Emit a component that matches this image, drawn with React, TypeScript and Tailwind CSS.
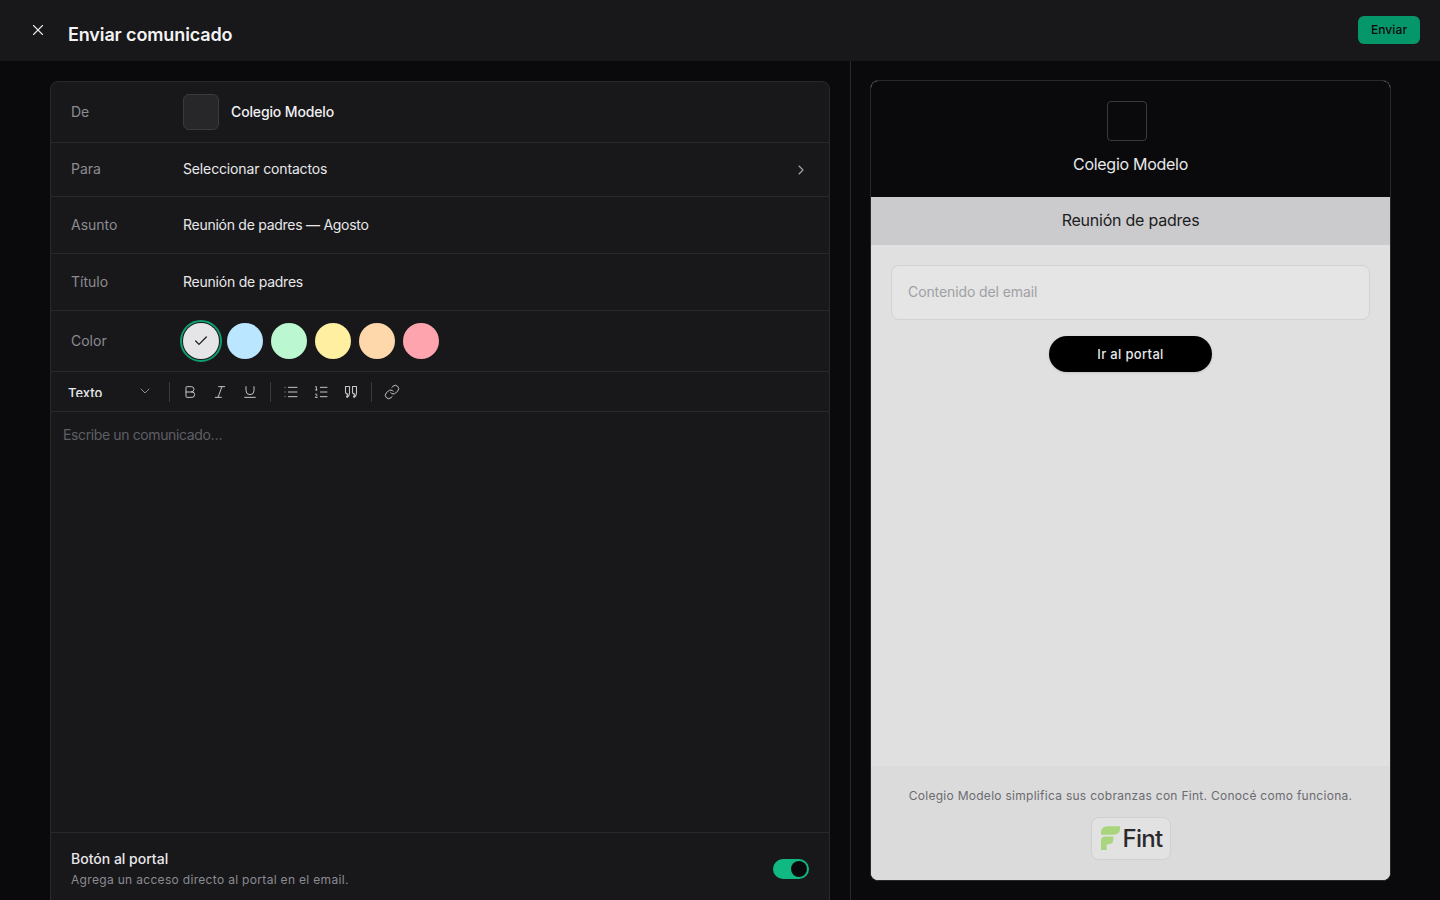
import React from "react";
import { X, ChevronRight, ChevronDown, Check, Bold, Italic, Underline, List, ListOrdered, Link } from "lucide-react";

function Row({ label, h, children }: { label: string; h: string; children: React.ReactNode }) {
  return (
    <div className={`flex items-center border-b border-[#29292c] pl-5 pr-5 ${h}`}>
      <div className="w-[112px] shrink-0 text-sm text-[#8b8b90]">{label}</div>
      {children}
    </div>
  );
}

function Quote() {
  return (
    <svg width="16" height="16" viewBox="0 0 16 16" fill="none" stroke="currentColor" strokeWidth="1.1" strokeLinejoin="round">
      <path d="M2.5 2.5h4v6.5c0 2.2-1 3.7-2.4 4.5l-.6-1c.8-.6 1.1-1.2 1.2-2.5-1.5 0-2.2-.8-2.2-2z" />
      <path d="M9.5 2.5h4v6.5c0 2.2-1 3.7-2.4 4.5l-.6-1c.8-.6 1.1-1.2 1.2-2.5-1.5 0-2.2-.8-2.2-2z" />
    </svg>
  );
}

export default function App() {
  const colors = ["bg-[#bae6ff]", "bg-[#bbf7d0]", "bg-[#fef0a0]", "bg-[#fed7aa]", "bg-[#fda4af]"];
  return (
    <div className="flex h-screen flex-col overflow-hidden bg-[#0a0a0c] font-['Inter',sans-serif] text-[#e8e8ea] antialiased">
      <header className="flex h-[61px] shrink-0 items-start bg-[#18181b]">
        <div className="mt-[21px] ml-[29px] text-[#e8e8ea]"><X size={18} strokeWidth={1.5} /></div>
        <h1 className="mt-[22px] ml-[21px] text-lg font-semibold leading-[26px] tracking-[-0.12px] text-[#f4f4f5]">Enviar comunicado</h1>
        <button className="mt-4 mr-5 ml-auto h-7 w-[62px] rounded-md bg-[#059669] text-xs font-medium tracking-[0.1px] text-[#0a0a0c]">Enviar</button>
      </header>
      <main className="flex min-h-0 flex-1">
        <section className="w-[851px] shrink-0 border-r border-[#29292c] pt-5 pl-[50px]">
          <div className="flex h-[860px] w-[780px] flex-col rounded-t-lg border border-[#29292c] bg-[#18181b]">
            <Row label="De" h="h-[61px]">
              <div className="h-9 w-9 rounded-md border border-[#3a3a3d] bg-[#27272a]" />
              <span className="ml-3 text-sm font-medium tracking-[-0.14px] text-[#f0f0f2]">Colegio Modelo</span>
            </Row>
            <Row label="Para" h="h-[54px] pb-0.5">
              <span className="text-sm tracking-[-0.14px] text-[#e8e8ea]">Seleccionar contactos</span>
              <ChevronRight size={16} strokeWidth={1.75} className="mt-0.5 ml-auto text-[#a0a0a5]" />
            </Row>
            <Row label="Asunto" h="h-[57px]">
              <span className="text-sm tracking-[-0.27px] text-[#e8e8ea]">Reunión de padres — Agosto</span>
            </Row>
            <Row label="Título" h="h-[57px]">
              <span className="text-sm tracking-[-0.23px] text-[#e8e8ea]">Reunión de padres</span>
            </Row>
            <Row label="Color" h="h-[61px]">
              <div className="flex items-center gap-2">
                <div className="flex h-9 w-9 items-center justify-center rounded-full bg-[#e5e5e7] text-[#18181b] outline-2 outline-offset-[1.5px] outline-[#0e9f6e]">
                  <Check size={16} strokeWidth={1.8} />
                </div>
                {colors.map((c) => (
                  <div key={c} className={`h-9 w-9 rounded-full ${c}`} />
                ))}
              </div>
            </Row>
            <div className="flex h-10 shrink-0 items-center border-b border-[#29292c] pr-3 pl-[17px] text-[#c4c4c8]">
              <div className="mt-[-6px] flex h-[17px] w-[85px] items-start justify-between overflow-hidden">
                <span className="mt-[3px] text-[13px] font-medium leading-[20px] text-[#e8e8ea]">Texto</span>
                <ChevronDown size={16} strokeWidth={1.5} className="mt-[3px] text-[#8b8b90]" />
              </div>
              <div className="mr-[12px] ml-[16px] h-5 w-px bg-[#3a3a3d]" />
              <div className="flex items-center gap-[14px]">
                <Bold size={16} strokeWidth={1.5} />
                <Italic size={16} strokeWidth={1.5} />
                <Underline size={16} strokeWidth={1.5} />
              </div>
              <div className="mx-[12px] h-5 w-px bg-[#3a3a3d]" />
              <div className="flex items-center gap-[14px]">
                <List size={16} strokeWidth={1.5} />
                <ListOrdered size={16} strokeWidth={1.5} />
                <Quote />
              </div>
              <div className="mx-[12px] h-5 w-px bg-[#3a3a3d]" />
              <Link size={16} strokeWidth={1.5} />
            </div>
            <div className="h-[421px] shrink-0 border-b border-[#29292c] px-3 py-[14px] text-sm leading-[18px] tracking-[-0.38px] text-[#5f5f64]">
              Escribe un comunicado…
            </div>
            <div className="flex items-start justify-between pt-[17px] pr-5 pl-5">
              <div>
                <div className="text-sm font-medium leading-[18px] text-[#e8e8ea]">Botón al portal</div>
                <div className="mt-[3px] text-xs leading-[18px] tracking-[0.32px] text-[#8b8b90]">Agrega un acceso directo al portal en el email.</div>
              </div>
              <div className="mt-[9px] flex h-5 w-9 items-center justify-end rounded-full bg-[#10b981] pr-0.5">
                <div className="h-4 w-4 rounded-full bg-[#0a0a0c]" />
              </div>
            </div>
          </div>
        </section>
        <section className="flex-1 pt-[19px] pl-[19px]">
          <div className="flex h-[801px] w-[521px] flex-col overflow-hidden rounded-lg border border-[#29292c] bg-[#e0e0e1]">
            <div className="flex h-[116px] shrink-0 flex-col items-center bg-[#0a0a0c] pt-5">
              <div className="mr-2 h-10 w-10 rounded border border-[#3a3a3d]" />
              <div className="mt-[13px] text-base leading-[20px] tracking-[-0.28px] text-[#e8e8ea]">Colegio Modelo</div>
            </div>
            <div className="flex h-12 shrink-0 items-center justify-center bg-[#cbcbcd] pb-0.5 text-base tracking-[-0.23px] text-[#1c1c1e]">Reunión de padres</div>
            <div className="flex min-h-0 flex-1 flex-col items-center px-5 pt-5">
              <div className="flex h-[55px] w-full items-center rounded-lg border border-[#d2d2d4] bg-[#e5e5e6] px-4 pb-0.5 text-sm tracking-[-0.1px] text-[#a0a0a3]">Contenido del email</div>
              <button className="mt-4 h-9 w-[163px] rounded-full bg-black pt-0.5 text-[13px] font-medium tracking-[0.33px] text-[#e8e8ea] shadow-sm">Ir al portal</button>
            </div>
            <div className="flex h-[114px] shrink-0 flex-col items-center bg-[#dbdbdc] pt-[22px]">
              <div className="text-xs leading-[16px] tracking-[0.28px] text-[#6b6b70]">Colegio Modelo simplifica sus cobranzas con Fint. Conocé como funciona.</div>
              <div className="mt-[13px] flex h-[43px] w-20 items-center justify-center gap-[3px] rounded-lg border border-[#d0d0d2] bg-[#e2e2e3] pl-0.5">
                <svg width="19" height="25" viewBox="0 0 20 26" fill="#a9d57c">
                  <path d="M0 7c0-4 2-7 7-7h13v3c0 4-3 6-7 6H0z" />
                  <path d="M0 15c0-3 2-4 5-4h8v3c0 4-3 5-6 5H6v6H0z" />
                </svg>
                <span className="text-[24px] font-medium leading-none tracking-[-0.7px] text-[#2a2a2c]">Fint</span>
              </div>
            </div>
          </div>
        </section>
      </main>
    </div>
  );
}
